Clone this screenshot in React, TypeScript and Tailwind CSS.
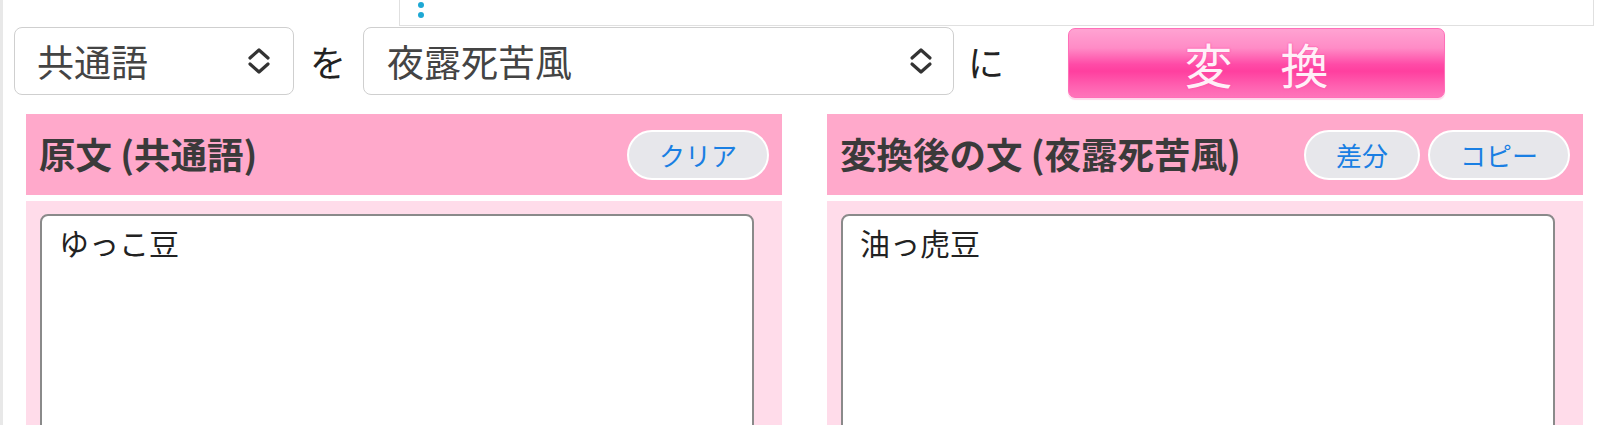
import React from "react";

const Chevron = () => (
  <svg width="26" height="30" viewBox="0 0 26 30" fill="none" stroke="#333" strokeWidth="3.2" strokeLinecap="round" strokeLinejoin="round">
    <polyline points="4,12 13,4 22,12" />
    <polyline points="4,18 13,26 22,18" />
  </svg>
);

const PillButton = ({ children }: { children: React.ReactNode }) => (
  <button className="h-[50px] rounded-full border-2 border-white bg-[#e7e7eb] px-[30px] text-[26px] leading-none text-[#1a7fe3]">
    {children}
  </button>
);

export default function App() {
  return (
    <div className="w-[1605px] h-[425px] overflow-hidden bg-white border-l-[3px] border-[#e8e8e8] font-['Noto_Sans_CJK_JP','Noto_Sans',sans-serif]">
      <div className="ml-[396px] w-[1195px] h-[26px] border border-t-0 border-[#e0e0e0] pl-[18px] pt-[2px] flex flex-col gap-[4px]">
        <span className="block w-[6px] h-[6px] rounded-full bg-[#1ea8d4]" />
        <span className="block w-[6px] h-[6px] rounded-full bg-[#1ea8d4]" />
      </div>

      <div className="flex items-start mt-[1px] pl-[11px]">
        <div className="w-[280px] h-[68px] rounded-[8px] border-[1.5px] border-[#cfcfcf] flex items-center justify-between pl-[22px] pr-[21px] text-[37px] text-[#444]">
          <span className="leading-none">共通語</span>
          <Chevron />
        </div>
        <span className="ml-[16px] mr-[17px] h-[68px] flex items-center text-[36px] text-[#222]">を</span>
        <div className="w-[591px] h-[68px] rounded-[8px] border-[1.5px] border-[#cfcfcf] flex items-center justify-between pl-[23px] pr-[19px] text-[37px] text-[#444]">
          <span className="leading-none">夜露死苦風</span>
          <Chevron />
        </div>
        <span className="ml-[14px] h-[68px] flex items-center text-[36px] text-[#222]">に</span>
        <button className="ml-[64px] mt-[1px] w-[377px] h-[70px] rounded-[7px] border border-[#ff6fb8] bg-[linear-gradient(to_bottom,#ffa3d2_0%,#ff8bc6_28%,#ff4ba7_52%,#ff3f9f_62%,#ff62b1_85%,#ff74ba_100%)] shadow-[0_2px_1px_#ffd9ec] flex items-center justify-center text-[48px] font-normal leading-none text-[#fff0f8] [text-shadow:0_0_2px_#ff4fa8,0_0_1px_#ff4fa8]">
          変　換
        </button>
      </div>

      <div className="flex gap-[45px] pl-[23px] mt-[16px]">
        {[
          { title: "原文 (共通語)", text: "ゆっこ豆", buttons: ["クリア"] },
          { title: "変換後の文 (夜露死苦風)", text: "油っ虎豆", buttons: ["差分", "コピー"] },
        ].map((p) => (
          <div key={p.title} className="w-[756px]">
            <div className="h-[81px] bg-[#ffa9cb] flex items-center justify-between px-[13px]">
              <span className="text-[36.5px] font-bold text-[#3a3a3a] leading-none">{p.title}</span>
              <div className="flex gap-[8px]">
                {p.buttons.map((b) => (
                  <PillButton key={b}>{b}</PillButton>
                ))}
              </div>
            </div>
            <div className="mt-[6px] bg-[#ffdcea] pt-[13px] pl-[14px] pr-[28px] h-[300px]">
              <textarea
                readOnly
                defaultValue={p.text}
                className="block w-full h-full resize-none rounded-[8px] border-2 border-[#8a8a8a] bg-white px-[17px] pt-[4px] pb-[6px] text-[30px] leading-[1.5] text-[#222] outline-none"
              />
            </div>
          </div>
        ))}
      </div>
    </div>
  );
}
